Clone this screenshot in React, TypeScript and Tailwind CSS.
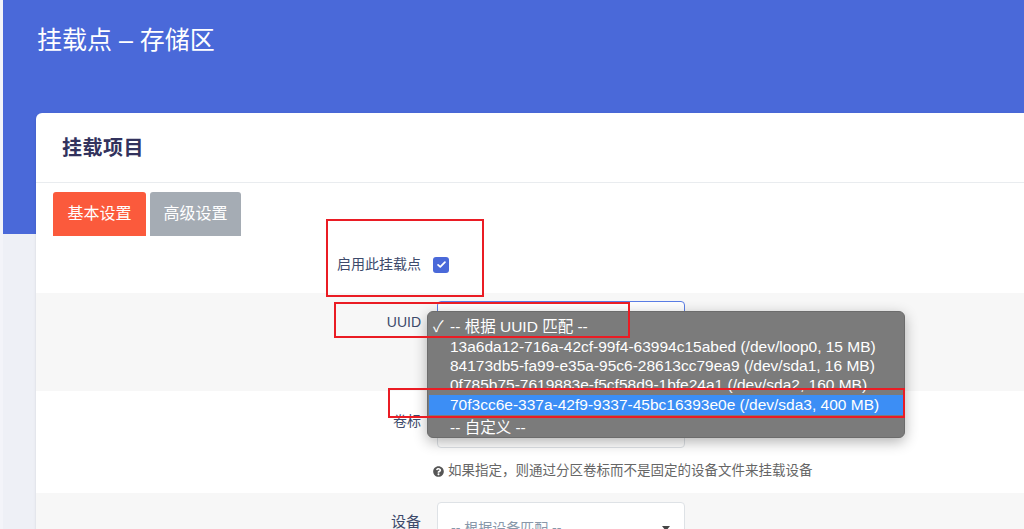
import React from 'react';
import { FaQuestionCircle } from 'react-icons/fa';

const menuItems = [
  { text: '13a6da12-716a-42cf-99f4-63994c15abed (/dev/loop0, 15 MB)', h: 'h-[20px]' },
  { text: '84173db5-fa99-e35a-95c6-28613cc79ea9 (/dev/sda1, 16 MB)', h: 'h-[18px]' },
  { text: '0f785b75-7619883e-f5cf58d9-1bfe24a1 (/dev/sda2, 160 MB)', h: 'h-[19px]' },
];

export default function App() {
  return (
    <div className="relative w-full h-[529px] overflow-hidden flex font-['Liberation_Sans','Noto_Sans_CJK_SC',sans-serif] bg-[#eef0f6]">
      {/* thin left edge */}
      <div className="w-[3px] shrink-0 bg-[#f3f4f9]" />

      <div className="flex-1 flex flex-col bg-[linear-gradient(to_bottom,#4a69d9_234px,#eef0f6_234px)]">
        {/* Page title */}
        <div className="h-[113px] shrink-0 pt-[22px] pl-[34px]">
          <h1 className="text-white text-[25px] leading-[36px] font-normal">挂载点 – 存储区</h1>
        </div>

        {/* Card */}
        <div className="ml-[33px] flex-1 min-h-0 overflow-hidden bg-white rounded-tl-md shadow-sm flex flex-col">
          <div className="h-[70px] shrink-0 flex items-center px-[26px] border-b border-[#e9ecef]">
            <h2 className="text-[20px] font-bold text-[#32325d] tracking-wide">挂载项目</h2>
          </div>

          {/* Tabs */}
          <div className="shrink-0 flex gap-[4px] pl-[17px] pt-[9px]">
            <div className="w-[93px] h-[44px] rounded-t-[3px] bg-[#fb5a3c] text-white text-[16px] flex items-center justify-center">基本设置</div>
            <div className="w-[91px] h-[44px] rounded-t-[3px] bg-[#a5acb4] text-white text-[16px] flex items-center justify-center">高级设置</div>
          </div>

          {/* Row: enable */}
          <div className="h-[57px] shrink-0 flex items-center">
            <div className="w-[385px] text-right text-[14px] text-[#3d4a6b]">启用此挂载点</div>
            <div className="ml-[12px] w-[16px] h-[16px] rounded-[3px] bg-[#4a69d9] flex items-center justify-center">
              <svg viewBox="0 0 16 16" className="w-[11px] h-[11px]" fill="none" stroke="white" strokeWidth="2.6" strokeLinecap="round" strokeLinejoin="round">
                <path d="M3 8.5l3.2 3L13 4.5" />
              </svg>
            </div>
          </div>

          {/* Row: UUID */}
          <div className="h-[98px] shrink-0 bg-[#f7f7f7] flex items-start pt-[8px]">
            <div className="w-[385px] pt-[11px] text-right text-[14px] text-[#3d4a6b]">UUID</div>
            <div className="ml-[16px] w-[248px] h-[38px] rounded-[4px] border border-[#5b7ee5] bg-white" />
          </div>

          {/* Row: label */}
          <div className="h-[102px] shrink-0 flex items-start pt-[19px]">
            <div className="w-[385px] pt-[1px] text-right text-[14px] text-[#3d4a6b]">卷标</div>
            <div className="ml-[12px] flex flex-col">
              <div className="ml-[4px] w-[248px] h-[38px] rounded-[4px] border border-[#dee2e6] bg-white" />
              <div className="mt-[13px] flex items-center gap-[4px] text-[13.5px] text-[#666]">
                <FaQuestionCircle className="w-[11px] h-[11px] text-[#555]" />
                <span>如果指定，则通过分区卷标而不是固定的设备文件来挂载设备</span>
              </div>
            </div>
          </div>

          {/* Row: device */}
          <div className="flex-1 shrink-0 bg-[#f7f7f7] flex items-start pt-[9px]">
            <div className="w-[385px] pt-[9px] text-right text-[15px] text-[#3d4a6b]">设备</div>
            <div className="ml-[16px] w-[248px] h-[38px] rounded-[4px] border border-[#dee2e6] bg-white flex items-center justify-between pl-[13px] pr-[14px]">
              <span className="text-[14px] text-[#8898aa] pt-[14px]">-- 根据设备匹配 --</span>
              <svg viewBox="0 0 8 5" className="w-[8px] h-[5px] mt-[14px]" fill="#444"><path d="M0 0h8L4 5z" /></svg>
            </div>
          </div>
        </div>
      </div>

      {/* Native select dropdown overlay */}
      <div className="absolute left-[427px] top-[311px] w-[478px] h-[127px] rounded-[6px] bg-[#7b7b7b] border border-[#6c6c6c] shadow-[0_4px_14px_rgba(0,0,0,0.3)] pt-[5px] text-white text-[15.5px] leading-none">
        <div className="h-[20px] flex items-center relative pl-[22px]">
          <span className="absolute left-[5px]">✓</span>
          <span>-- 根据 UUID 匹配 --</span>
        </div>
        {menuItems.map((m) => (
          <div key={m.text} className={`${m.h} flex items-center pl-[22px] whitespace-nowrap`}>{m.text}</div>
        ))}
        <div className="h-[20px] mx-[1px] mt-[1px] flex items-center pl-[21px] bg-[#3c8ef5] whitespace-nowrap">70f3cc6e-337a-42f9-9337-45bc16393e0e (/dev/sda3, 400 MB)</div>
        <div className="h-[22px] pt-[4px] flex items-center pl-[22px]">-- 自定义 --</div>
      </div>

      {/* Annotation boxes */}
      <div className="absolute left-[326px] top-[219px] w-[158px] h-[78px] border-2 border-[#ea1c24]" />
      <div className="absolute left-[334px] top-[302px] w-[296px] h-[36px] border-2 border-[#ea1c24]" />
      <div className="absolute left-[388px] top-[388px] w-[517px] h-[30px] border-2 border-[#ea1c24]" />
    </div>
  );
}
